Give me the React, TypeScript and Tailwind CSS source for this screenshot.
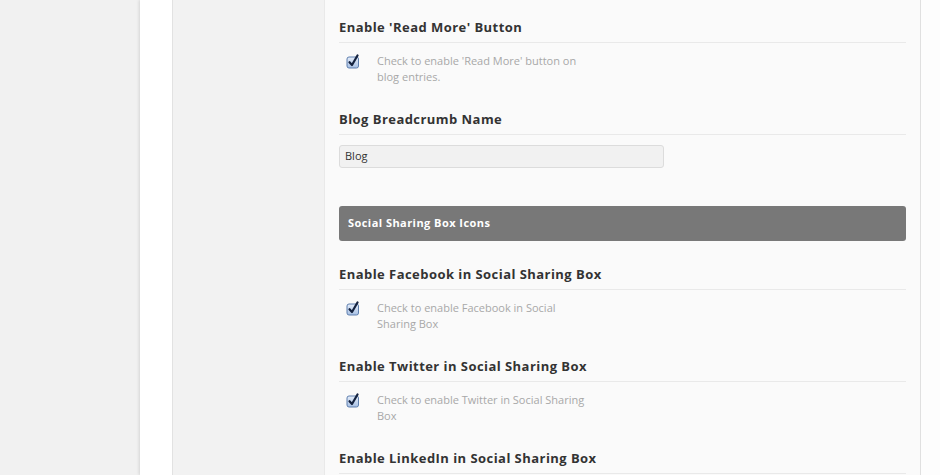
import React from "react";

function Check() {
  return (
    <svg width="14" height="15" viewBox="0 0 14 15" className="shrink-0">
      <defs>
        <linearGradient id="cbg" x1="0" y1="0" x2="0" y2="1">
          <stop offset="0" stopColor="#e6eefa" />
          <stop offset="1" stopColor="#a7c0e4" />
        </linearGradient>
      </defs>
      <rect x="1" y="3" width="11.5" height="11" rx="2" fill="url(#cbg)" stroke="#5e7fae" strokeWidth="1" />
      <path d="M3.5 8.2 L6 11 L11.5 1.5" fill="none" stroke="#14223f" strokeWidth="2.2" strokeLinecap="round" strokeLinejoin="round" />
    </svg>
  );
}

function Heading({children}: {children: React.ReactNode}) {
  return (
    <h3 className="text-[13px] font-bold leading-5 tracking-[0.45px] text-[#333] pb-[5px] border-b border-[#e9e9e9]">
      {children}
    </h3>
  );
}

function CheckOption({title, desc}: {title: string; desc: string}) {
  return (
    <div className="mb-6">
      <Heading>{title}</Heading>
      <div className="mt-[10px] flex pl-2">
        <div className="mt-[1px] -ml-[1px]"><Check /></div>
        <p className="ml-[17px] w-[215px] text-[11px] leading-4 text-[#a8a8a8]">{desc}</p>
      </div>
    </div>
  );
}

export default function App() {
  return (
    <div className="flex h-[475px] overflow-hidden bg-[#f1f1f1]" style={{fontFamily: "'Open Sans', sans-serif"}}>
      <div className="w-[140px] shrink-0" />
      <div className="w-[33px] shrink-0 bg-white border-r border-[#e2e2e2] shadow-[-1px_0_3px_rgba(0,0,0,0.12)]" />
      <div className="w-[152px] shrink-0 bg-[#f2f2f2] border-r border-[#e9e9e9]" />
      <div className="w-[596px] shrink-0 bg-[#fafafa] border-r border-[#e0e0e0] px-[14px] pt-[17px]">
        <CheckOption title="Enable 'Read More' Button" desc="Check to enable 'Read More' button on blog entries." />

        <Heading>Blog Breadcrumb Name</Heading>
        <div className="mt-[10px] w-[325px] h-[23px] flex items-center px-[5px] bg-[#f1f1f1] border border-[#dcdcdc] rounded-[3px] text-[11px] text-[#333]">
          Blog
        </div>

        <div className="mt-[38px] mb-[23px] h-[35px] flex items-center px-[9px] bg-[#787878] rounded-[3px] text-[11px] font-bold tracking-[0.45px] text-white">
          Social Sharing Box Icons
        </div>

        <CheckOption title="Enable Facebook in Social Sharing Box" desc="Check to enable Facebook in Social Sharing Box" />
        <CheckOption title="Enable Twitter in Social Sharing Box" desc="Check to enable Twitter in Social Sharing Box" />
        <CheckOption title="Enable LinkedIn in Social Sharing Box" desc="Check to enable LinkedIn in Social Sharing Box" />
      </div>
      <div className="flex-1 bg-[#fdfdfd]" />
    </div>
  );
}
